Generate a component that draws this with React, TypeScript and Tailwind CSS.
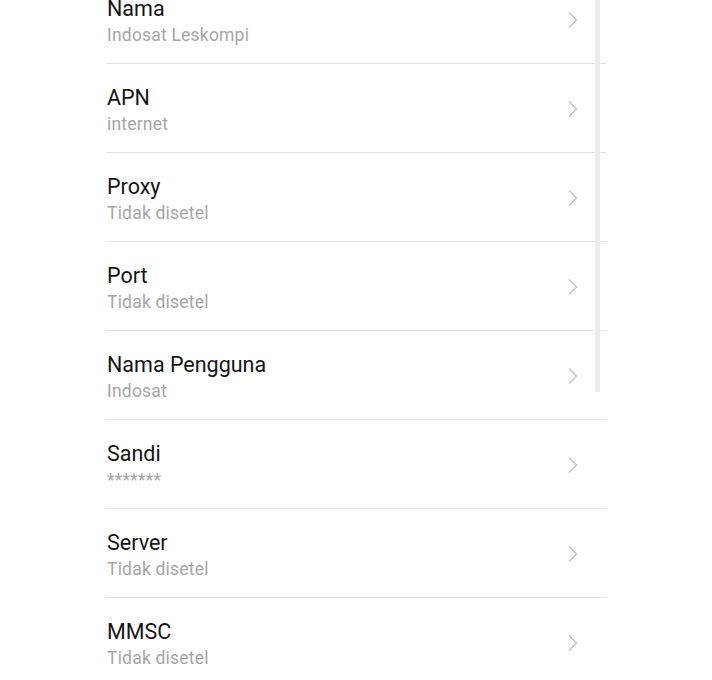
import React from "react";

const rows = [
  { t: "Nama", s: "Indosat Leskompi" },
  { t: "APN", s: "internet" },
  { t: "Proxy", s: "Tidak disetel" },
  { t: "Port", s: "Tidak disetel" },
  { t: "Nama Pengguna", s: "Indosat" },
  { t: "Sandi", s: "*******" },
  { t: "Server", s: "Tidak disetel" },
  { t: "MMSC", s: "Tidak disetel" },
];

function Chevron() {
  return (
    <svg width="12" height="18" viewBox="0 0 12 18" className="shrink-0">
      <path d="M2 1.5 L9.5 9 L2 16.5" fill="none" stroke="#c2c2c2" strokeWidth="1.4" />
    </svg>
  );
}

export default function App() {
  return (
    <div
      className="relative w-[712px] h-[680px] overflow-hidden bg-white"
      style={{ fontFamily: "Roboto, 'Noto Sans', sans-serif" }}
    >
      <div className="ml-[106px] w-[501px] -mt-[25px]">
        {rows.map((r, i) => (
          <div key={i} className="h-[89px] flex items-center border-b border-[#e3e3e3]">
            <div className="flex-1 flex flex-col pt-[4px] pl-px">
              <div className="text-[21.5px] leading-[28px] text-[#141414]">{r.t}</div>
              <div className="text-[17.5px] leading-[24px] tracking-[0.2px] text-[#a6a6a6]">{r.s}</div>
            </div>
            <div className="mr-[28px] mt-[2px] flex items-center">
              <Chevron />
            </div>
          </div>
        ))}
      </div>
      <div className="absolute left-[595px] top-0 w-[5px] h-[392px] bg-[#ececec]" />
    </div>
  );
}
